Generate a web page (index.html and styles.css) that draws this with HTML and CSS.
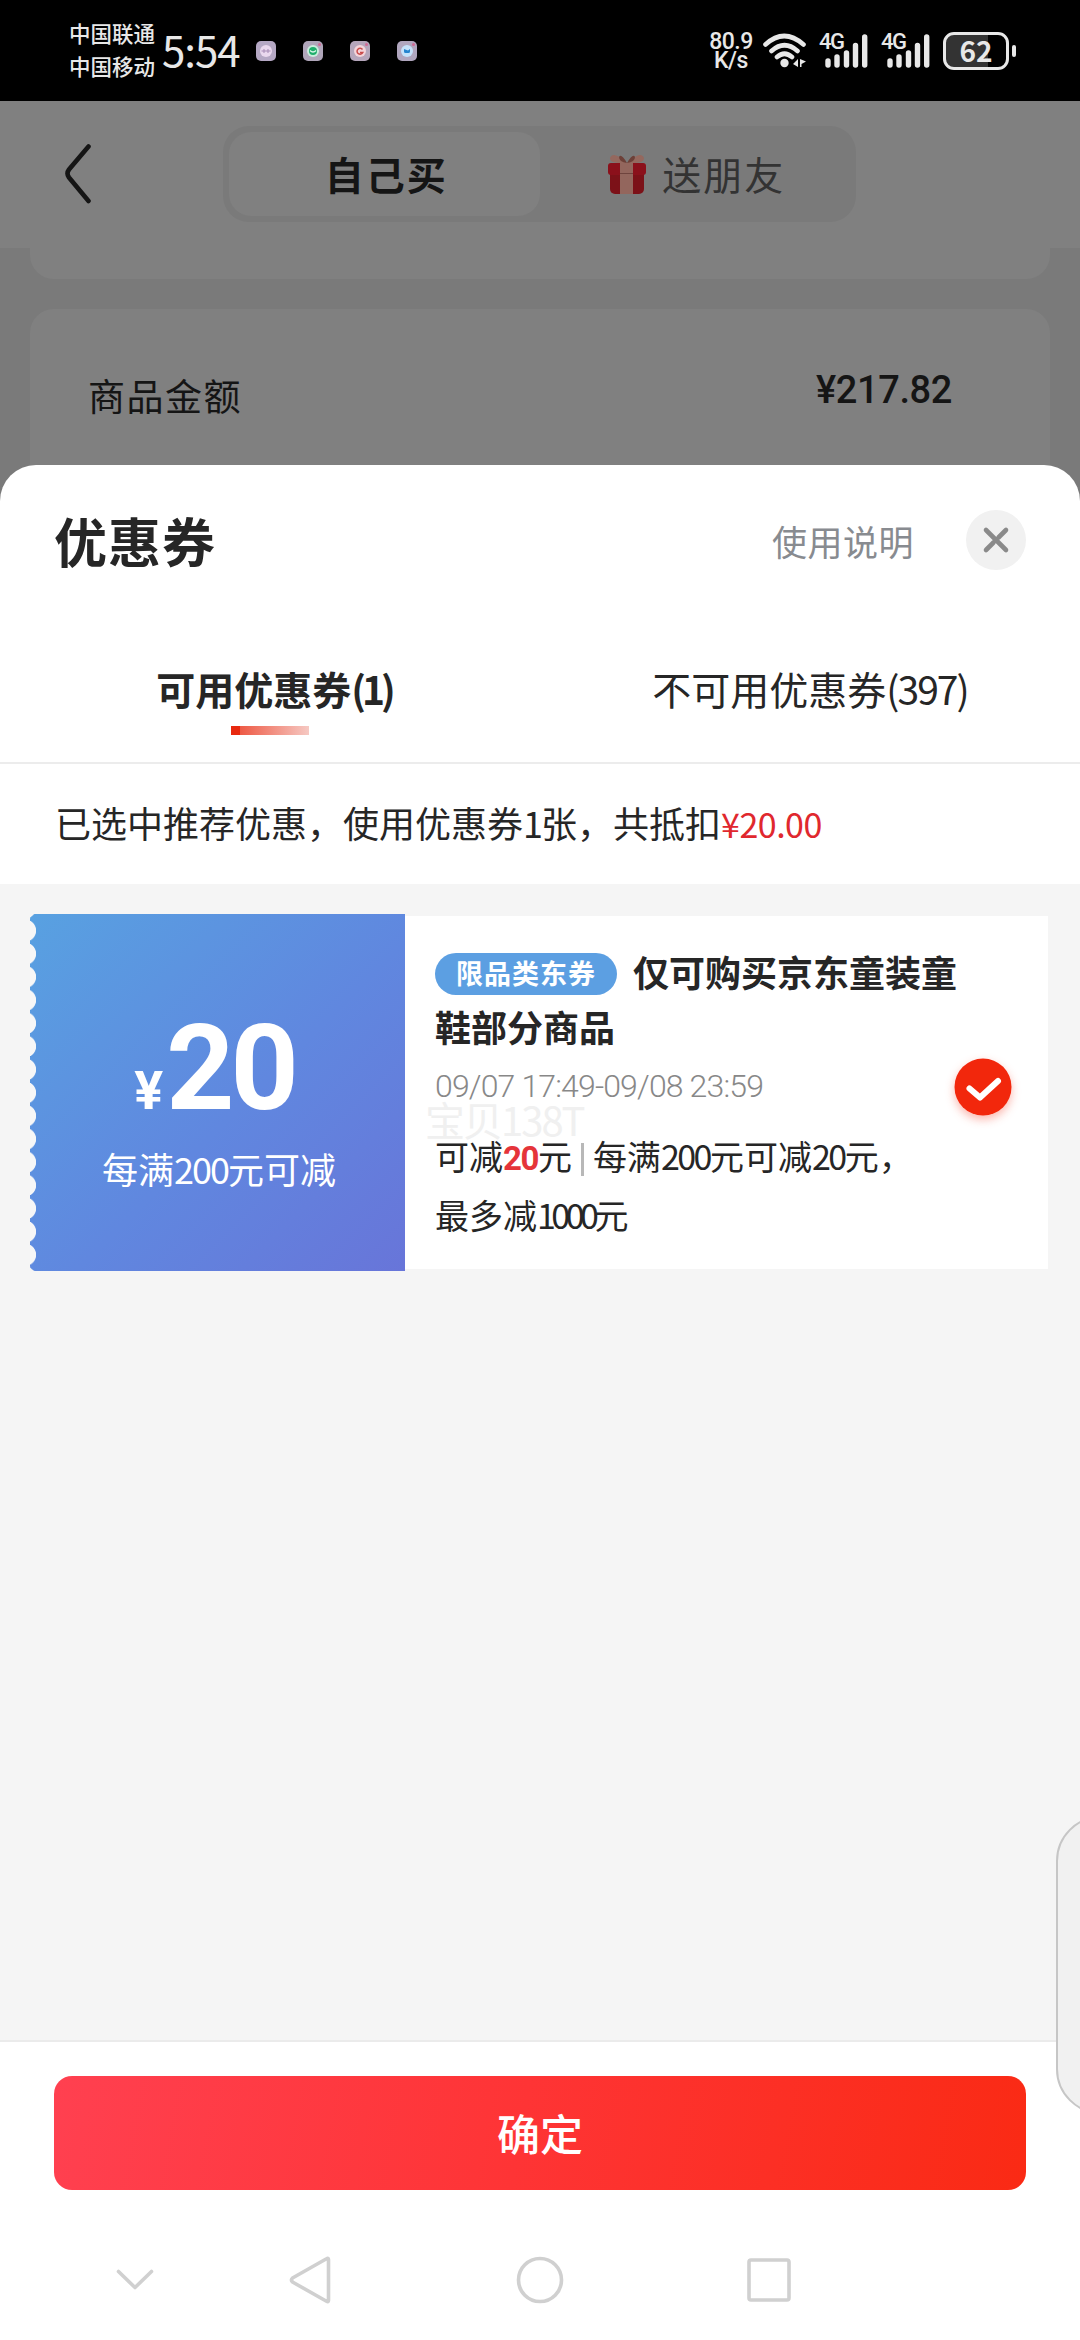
FILE: index.html
```html
<!DOCTYPE html>
<html lang="zh-CN">
<head>
<meta charset="utf-8">
<title>优惠券</title>
<link rel="stylesheet" href="styles.css">
</head>
<body>
<div class="screen">
  <header class="status">
    <div class="carriers"><span>中国联通</span><span>中国移动</span></div>
    <div class="clock">5:54</div>
    <div class="notices">
      <svg viewBox="0 0 20 20"><rect width="20" height="20" rx="5" fill="#b5a8c4"/><circle cx="10" cy="10" r="6" fill="#ead8ee"/><path d="M5.5 10h9M8 8v4M12 8v4" stroke="#a68bb5" stroke-width="1"/></svg>
      <svg viewBox="0 0 20 20"><rect width="20" height="20" rx="5" fill="#b0a6ba"/><circle cx="10" cy="10" r="6" fill="#c9eedd"/><circle cx="10" cy="10" r="4" fill="#1fae6b"/><path d="M7 9.5q3 3 6 0" stroke="#d8f5e8" stroke-width="1.4" fill="none"/><circle cx="16.500" cy="3.500" r="1.500" fill="#d06a94"/></svg>
      <svg viewBox="0 0 20 20"><rect width="20" height="20" rx="5" fill="#b5a6bb"/><circle cx="10" cy="10" r="6" fill="#f3d4da"/><path d="M12.500 8.500a3 3 0 1 0 .3 3H10" stroke="#c84b4b" stroke-width="1.500" fill="none"/><circle cx="16.500" cy="3.500" r="1.500" fill="#d06a94"/></svg>
      <svg viewBox="0 0 20 20"><rect width="20" height="20" rx="5" fill="#b0a6be"/><circle cx="10" cy="10" r="6" fill="#c5e2fa"/><path d="M7 8v2.500q0 1.500 1.500 1.500h3q1.500 0 1.500-1.500V8l-2 1.500z" fill="#2585cf"/><circle cx="16.500" cy="3.500" r="1.500" fill="#d06a94"/></svg>
    </div>
    <div class="speed"><span>80.9</span><span>K/s</span></div>
    <svg class="wifi" viewBox="0 0 44 36" fill="none" stroke="#e8e8e8" stroke-width="4.600" stroke-linecap="round"><path d="M2.500 11.500Q21 -5.500 40.500 11.500M8.500 18Q21.500 6.500 34.500 18M14 24Q21.500 17.500 29 24"/><circle cx="21.500" cy="30" r="4.200" fill="#e8e8e8" stroke="none"/><path d="M35 26v8l-5-3zM37 26l6 2.500-4.500 2.500v3H37z" fill="#e8e8e8" stroke="none"/></svg>
    <div class="cell"><span>4G</span><svg viewBox="0 0 44 36" stroke="#e8e8e8" stroke-width="5.400" stroke-linecap="round"><path d="M3 28v4M12 24v8M21.500 20v12M30.500 12.500V32M39.700 4v28"/></svg></div>
    <div class="cell"><span>4G</span><svg viewBox="0 0 44 36" stroke="#e8e8e8" stroke-width="5.400" stroke-linecap="round"><path d="M3 28v4M12 24v8M21.500 20v12M30.500 12.500V32M39.700 4v28"/></svg></div>
    <div class="battery">62</div>
    <i class="nub"></i>
  </header>

  <section class="backdrop">
    <div class="nav">
      <svg class="back" viewBox="0 0 26 60"><path d="M23.500 2.500L4 25.500Q1 29.500 4 33.500L23.500 57" fill="none" stroke="#151515" stroke-width="4.600" stroke-linecap="round"/></svg>
      <div class="segment">
        <div class="seg on">自己买</div>
        <div class="seg">
          <svg class="gift" viewBox="0 0 38 42"><path d="M19 10Q5-3 2 5q-1 6 17 5Q33-3 36 5q1 6-17 5z" fill="#94685e"/><path d="M19 10Q13 0 11 4q0 5 8 6Q25 0 27 4q0 5-8 6z" fill="#6d4038"/><rect x="2" y="16" width="34" height="25" rx="5" fill="#7c1118"/><rect y="10" width="38" height="12" rx="3" fill="#8b101b"/><path d="M12 10h13v31H12z" fill="#93665d"/><path d="M12 20.500h13" stroke="#6f443e" stroke-width="1"/></svg>
          <span>送朋友</span>
        </div>
      </div>
    </div>
    <div class="card stub"></div>
    <div class="card amount"><span>商品金额</span><b>¥217.82</b></div>
  </section>

  <main class="sheet">
    <div class="head">
      <h1>优惠券</h1>
      <span class="help">使用说明</span>
      <svg class="close" viewBox="0 0 60 60"><circle cx="30" cy="30" r="30" fill="#f1f1f1"/><path d="M20 20l20 20M40 20l-7.500 7.500M27.500 32.500L20 40" stroke="#8a8a8a" stroke-width="4.600" stroke-linecap="round"/></svg>
    </div>
    <div class="tabs">
      <div class="tab on"><span>可用优惠券<em>(1)</em></span><i></i></div>
      <div class="tab"><span>不可用优惠券<em>(397)</em></span></div>
    </div>
    <p class="summary">已选中推荐优惠，使用优惠券<em>1</em>张，共抵扣<b>¥20.00</b></p>

    <div class="list">
      <article class="coupon">
        <div class="face">
          <div class="value"><small>¥</small>20</div>
          <div class="rule">每满<em>200</em>元可减</div>
        </div>
        <div class="detail">
          <h2><span class="badge">限品类东券</span>仅可购买京东童装童鞋部分商品</h2>
          <div class="date">09/07 17:49-09/08 23:59</div>
          <div class="mark">宝贝138T</div>
          <p class="terms">可减<b>20</b>元<i></i>每满<em>200</em>元可减<em>20</em>元，<br>最多减<em class="k">1000</em>元</p>
          <svg class="check" viewBox="0 0 58 58"><circle cx="29" cy="29" r="28.500" fill="#f2270c"/><path d="M15.500 30.500L26 39.500L44 23" fill="none" stroke="#fff" stroke-width="6" stroke-linecap="round" stroke-linejoin="round"/></svg>
        </div>
      </article>
    </div>

    <div class="action"><button>确定</button></div>
    <nav class="keys">
      <svg viewBox="0 0 50 50"><path d="M8.500 16.500l16.500 16 16.500-16"/></svg>
      <svg viewBox="0 0 50 50"><path d="M42.500 4.500v41q0 2-2 .8L6.500 27q-2-2 0-4L40.500 3.700q2-1.200 2 .8z"/></svg>
      <svg viewBox="0 0 50 50"><circle cx="25" cy="25" r="21.500"/></svg>
      <svg viewBox="0 0 50 50"><rect x="5" y="5" width="40" height="40" rx="2"/></svg>
    </nav>
  </main>
  <div class="handle"></div>
</div>
</body>
</html>
```
FILE: styles.css
```css
* { box-sizing: border-box; }
body { margin: 0; font-family: "Noto Sans CJK SC", sans-serif; color: #262626; }
em, i, h1, h2, p { font-style: normal; margin: 0; }
svg { display: block; flex: none; }
.screen { position: relative; width: 1080px; height: 2340px; overflow: hidden; display: flex; flex-direction: column; background: #fff; }

/* system status bar */
.status { height: 101px; flex: none; background: #000; color: #e8e8e8; display: flex; align-items: center; padding-left: 69px; white-space: nowrap; }
.carriers { width: 93px; padding-bottom: 3px; display: flex; flex-direction: column; font-size: 21.5px; line-height: 33px; font-weight: 500; }
.clock { width: 77px; padding-bottom: 4px; font-size: 42px; line-height: 60px; letter-spacing: -1px; }
.notices { display: flex; gap: 27px; margin-left: 17px; width: 454px; }
.notices svg { width: 20px; height: 20px; }
.speed { width: 42px; display: flex; flex-direction: column; align-items: center; font: 500 23px/19px Roboto, sans-serif; letter-spacing: -.5px; }
.wifi { width: 44px; height: 36px; margin-left: 11px; }
.cell { position: relative; width: 50px; margin-left: 12px; display: flex; justify-content: flex-end; }
.cell svg { width: 44px; height: 36px; }
.cell span { position: absolute; left: 0; top: -1px; font: 500 22px/20px Roboto, sans-serif; letter-spacing: -1.500px; }
.battery { width: 66px; height: 38px; margin-left: 12px; border: 3px solid #e8e8e8; border-radius: 11px; background: linear-gradient(90deg, #333 42px, #000 42px); font-size: 28px; font-weight: 700; line-height: 30px; text-align: center; }
.nub { width: 4px; height: 12px; margin-left: 3px; border-radius: 2px; background: #e8e8e8; }

/* dimmed checkout page */
.backdrop { height: 404px; flex: none; background: #7a7a7a; display: flex; flex-direction: column; color: #151515; }
.nav { height: 147px; background: #808080; display: flex; padding: 25px 0 0 65px; }
.back { width: 26px; height: 60px; margin-top: 18px; }
.segment { width: 633px; height: 96px; margin-left: 132px; padding: 6px; border-radius: 26px; background: #7a7a7a; display: flex; }
.seg { flex: 1; display: flex; align-items: center; justify-content: center; gap: 16px; padding: 0 0 3px 4px; font-size: 39px; letter-spacing: 2px; color: #333; }
.seg.on { border-radius: 22px; background: #808080; color: #151515; font-weight: 700; }
.gift { width: 38px; height: 42px; margin-top: 2px; }
.card { margin: 0 30px; background: #808080; border-radius: 24px; }
.stub { height: 31px; border-radius: 0 0 24px 24px; }
.amount { flex: 1; margin-top: 30px; border-radius: 24px 24px 0 0; display: flex; justify-content: space-between; padding: 59px 98px 0 58px; font-size: 37px; line-height: 54px; letter-spacing: 1.500px; }
.amount b { font: 500 38px/44px Roboto, sans-serif; letter-spacing: -.4px; }

/* coupon sheet */
.sheet { position: relative; flex: 1; margin-top: -40px; background: #fff; border-radius: 36px 36px 0 0; display: flex; flex-direction: column; }
.head { height: 150px; flex: none; display: flex; align-items: center; padding: 0 54px 0 54px; }
.head h1 { flex: 1; font-size: 53px; line-height: 70px; letter-spacing: 1px; }
.help { font-size: 35px; color: #888b90; margin-right: 52px; letter-spacing: .5px; }
.close { width: 60px; height: 60px; }
.tabs { height: 149px; flex: none; border-bottom: 2px solid #ececec; display: flex; padding-top: 43px; font-size: 39px; line-height: 60px; }
.tab { flex: 1; display: flex; flex-direction: column; align-items: center; }
.tab.on { font-weight: 700; }
.tab i { width: 78px; height: 9px; margin-top: 8px; background: linear-gradient(90deg, #e8290f 9px, #ee5a45 9px, #f6c9c3); }
.tab em { letter-spacing: -2px; }
.tab.on span { padding-left: 8px; }
.tab.on em { letter-spacing: -4px; }
.summary { height: 120px; flex: none; padding: 31px 0 0 55px; font-size: 36px; line-height: 54px; white-space: nowrap; }
.summary em { letter-spacing: -2px; }
.summary b { font-weight: 400; font-size: 34px; color: #e0282e; letter-spacing: -.5px; }
.list { height: 1158px; flex: none; background: #f5f5f5; padding: 30px 32px 0 30px; border-bottom: 2px solid #ebebeb; }
.coupon { display: flex; height: 357px; }
.face { width: 375px; padding-top: 100px; border-radius: 5px 0 0 5px; color: #fff; text-align: center;
  background: radial-gradient(circle at -5px 11.6px, #f7f7f7 10.700px, transparent 11.500px) 0 5px / 12px 23.160px repeat-y, linear-gradient(135deg, #58a1e1, #6087df 55%, #6875d9); }
.value { height: 110px; font: 700 119px/110px Roboto, sans-serif; letter-spacing: -4px; padding-right: 6px; }
.value small { font-size: 54px; letter-spacing: 3px; }
.rule { font-size: 36px; line-height: 54px; margin-top: 17px; padding-left: 3px; }
.rule em { letter-spacing: -2px; }
.detail { position: relative; flex: 1; margin: 2px 0; background: #fff; padding: 28px 0 0 30px; }
.detail h2 { width: 550px; font-size: 36px; line-height: 55px; font-weight: 700; }
.badge { display: inline-block; vertical-align: 3px; width: 182px; height: 42px; margin-right: 16px; border-radius: 21px; background: #5c9fe2; color: #fff; font-size: 27px; line-height: 39px; text-align: center; letter-spacing: 1px; }
.date { font: 300 32px/40px Roboto, sans-serif; color: #888; letter-spacing: -.850px; margin-top: 12px; }
.mark { position: absolute; left: 20px; top: 180px; font-size: 40px; line-height: 46px; letter-spacing: -2px; color: #f0f0f0; }
.terms { position: relative; font-size: 34px; line-height: 56px; margin-top: 22px; white-space: nowrap; }
.terms b { font-family: Roboto, sans-serif; font-size: 33px; color: #e5343a; letter-spacing: -1.500px; }
.terms em { letter-spacing: -2.500px; }
.terms .k { letter-spacing: -4.500px; }
.terms i { display: inline-block; width: 3px; height: 33px; margin: 0 9px; vertical-align: -6px; background: #b8b8b8; }
.check { position: absolute; right: 36px; top: 142px; width: 58px; height: 58px; filter: drop-shadow(0 4px 5px #f2270c55); }
.action { height: 179px; flex: none; padding: 34px 54px 0; }
.action button { display: block; width: 100%; height: 114px; padding: 0 0 2px; border: 0; border-radius: 18px; background: linear-gradient(100deg, #ff4050, #fe3435 48%, #fa2a14); color: #fff; font: 500 43px "Noto Sans CJK SC", sans-serif; }
.keys { display: flex; padding: 34px 0 0 110px; fill: none; stroke: #d0d0d0; stroke-width: 3.600; stroke-linecap: round; stroke-linejoin: round; }
.keys svg { width: 50px; height: 50px; }
.keys svg:nth-child(2) { margin-left: 126px; }
.keys svg:nth-child(3) { margin-left: 179px; }
.keys svg:nth-child(4) { margin-left: 179px; }

/* floating edge panel, cut off by the right edge */
.handle { position: absolute; left: 1056px; top: 1816px; width: 90px; height: 298px; border: 2px solid #c6c6c6; border-radius: 45px; background: #f1f1f1; }
```
